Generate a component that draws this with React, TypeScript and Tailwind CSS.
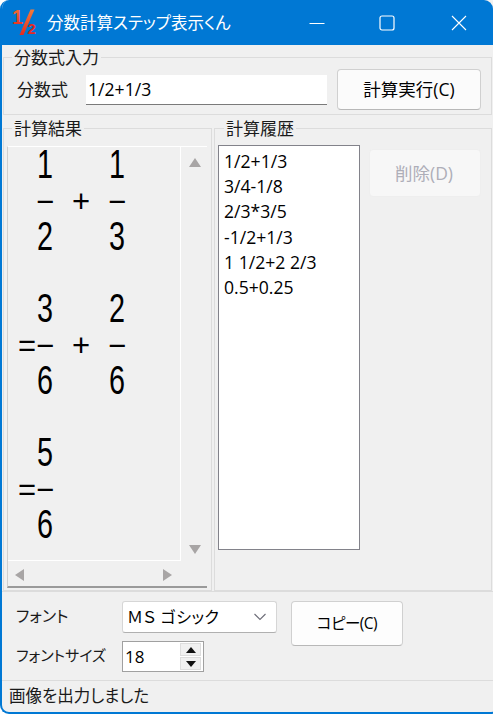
import React from "react";

const JP = "font-['Open_Sans','Noto_Sans_CJK_JP',sans-serif] [font-feature-settings:'palt']";

const LINES = [
  " 1   1",
  " - + -",
  " 2   3",
  "      ",
  " 3   2",
  "=- + -",
  " 6   6",
  "      ",
  " 5    ",
  "=-    ",
  " 6    ",
];

function MathCell({ c }: { c: string }) {
  if (c === " ") return <div className="h-9" />;
  if (c === "-" || c === "+" || c === "=") {
    return (
      <div className="flex items-center justify-center h-9 pt-[3px] font-['Liberation_Sans',sans-serif] text-[31px] leading-[33px] text-black">
        {c === "-" ? "\u2212" : c}
      </div>
    );
  }
  return (
    <div className="flex items-center justify-center h-9 font-['Liberation_Sans',sans-serif] text-[40px] leading-9 text-black scale-x-[0.72]">
      {c}
    </div>
  );
}

function MathLine({ text }: { text: string }) {
  return (
    <div className="grid grid-cols-[repeat(6,18px)] h-9">
      {text.split("").map((c, i) => (
        <MathCell key={i} c={c} />
      ))}
    </div>
  );
}

function Tri({ dir }: { dir: "up" | "down" | "left" | "right" }) {
  const pts = { up: "6,1 12,10 0,10", down: "0,1 12,1 6,10", left: "10,0 10,12 1,6", right: "1,0 1,12 10,6" }[dir];
  return (
    <svg width="12" height="12" viewBox="0 0 12 12" className="shrink-0">
      <polygon points={pts} fill="#a8a5a5" />
    </svg>
  );
}

function Group({ title, legendClass, className, children }: { title: string; legendClass: string; className: string; children: React.ReactNode }) {
  return (
    <fieldset className={"border border-[#dcdcdc] m-0 min-w-0 " + className}>
      <legend className={"px-[2px] text-[17px] leading-[17px] text-[#1a1a1a] " + legendClass}>{title}</legend>
      {children}
    </fieldset>
  );
}

export default function App() {
  return (
    <div className={"w-[493px] h-[714px] bg-white overflow-hidden " + JP}>
      <div className="w-[500px] h-[714px] flex flex-col rounded-[9px] overflow-hidden bg-[#f0f0f0] border-l-2 border-b-2 border-[#0078d4]">
        {/* title bar */}
        <div className="h-[45px] shrink-0 -ml-[2px] w-[493px] bg-[#0078d4] flex items-center rounded-tr-[9px] text-white">
          <svg width="28" height="28" viewBox="0 0 28 28" className="ml-[12px] mt-[1px] shrink-0">
            <defs>
              <linearGradient id="g" x1="0" y1="0" x2="0" y2="1">
                <stop offset="0" stopColor="#f47b3a" />
                <stop offset="1" stopColor="#e5291f" />
              </linearGradient>
            </defs>
            <text x="0" y="14.5" fontSize="20" fontWeight="700" fontFamily="Liberation Sans" fill="url(#g)">1</text>
            <path d="M18.5 0.5 L22.5 0.5 L11.5 26 L7.5 26 Z" fill="url(#g)" />
            <text x="15.5" y="24.5" fontSize="15" fontWeight="700" fontFamily="Liberation Sans" fill="#e5291f">2</text>
          </svg>
          <span className="ml-[7px] text-[16.5px] leading-[20px]">分数計算ステップ表示くん</span>
          <div className="ml-auto flex items-center h-full">
            <svg width="16" height="16" viewBox="0 0 16 16" className="mr-[54px]">
              <path d="M0.5 8.5H15.5" stroke="#fff" strokeWidth="1" />
            </svg>
            <svg width="16" height="16" viewBox="0 0 16 16" className="mr-[56px]">
              <rect x="1" y="1" width="14" height="14" rx="2" fill="none" stroke="#fff" strokeWidth="1.2" />
            </svg>
            <svg width="16" height="16" viewBox="0 0 16 16" className="mr-[26px]">
              <path d="M1 1L15 15M15 1L1 15" stroke="#fff" strokeWidth="1.1" />
            </svg>
          </div>
        </div>

        {/* 分数式入力 */}
        <Group title="分数式入力" legendClass="ml-[8px]" className="h-[66px] ml-[1px] w-[489px] mt-[4px] shrink-0">
          <div className="flex items-start mt-[3px] pl-[13px]">
            <label className="mt-[9px] w-[69px] text-[17px] leading-[24px] text-[#1a1a1a]">分数式</label>
            <div className="w-[241px] h-[30px] mt-[6px] bg-white border-b border-[#7a7a7a] flex items-center pl-[2px] text-[17.6px] text-black">1/2+1/3</div>
            <button className="ml-[10px] w-[144px] h-[41px] rounded-[4px] bg-[#fbfbfb] border border-[#d0d0d0] border-b-[#b8b8b8] text-[17.5px] text-black">計算実行(C)</button>
          </div>
        </Group>

        {/* middle */}
        <div className="flex mt-[5px] h-[471px] w-[491px] shrink-0 pl-[1px]">
          <Group title="計算結果" legendClass="ml-[8px]" className="w-[209px] h-[471px]">
            <div className="ml-[3px] mt-[9px] w-[200px] h-[442px] grid grid-cols-[173px_27px] grid-rows-[414px_28px] border-t border-white border-b-2 border-b-[#9a9a9a] border-l border-l-[#cfcfcf]">
              <div className="border-r border-b border-white overflow-hidden pl-[10px]">
                <div className="-mt-[1px]">
                  {LINES.map((l, i) => (
                    <MathLine key={i} text={l} />
                  ))}
                </div>
              </div>
              <div className="flex flex-col items-center justify-between pt-[10px] pb-[5px]">
                <Tri dir="up" />
                <Tri dir="down" />
              </div>
              <div className="flex items-center justify-between pl-[6px] pr-[7px]">
                <Tri dir="left" />
                <Tri dir="right" />
              </div>
              <div />
            </div>
          </Group>
          <Group title="計算履歴" legendClass="ml-[9px]" className="ml-[2px] w-[278px] h-[471px]">
            <div className="flex items-start mt-[8px]">
              <div className="ml-[3px] w-[142px] h-[405px] bg-white border border-[#82828a] pt-[3px] pl-[5px] text-[17.6px] leading-[25.2px] text-black">
                <div>1/2+1/3</div>
                <div>3/4-1/8</div>
                <div>2/3*3/5</div>
                <div>-1/2+1/3</div>
                <div>1 1/2+2 2/3</div>
                <div>0.5+0.25</div>
              </div>
              <button disabled className="ml-[9px] mt-[4px] w-[112px] h-[48px] rounded-[4px] bg-[#f7f7f7] border border-[#eeeeee] text-[17.5px] pr-[2px] text-[#aeaeb8]">削除(D)</button>
            </div>
          </Group>
        </div>

        {/* bottom */}
        <div className="h-[90px] shrink-0 w-[491px] flex border-t border-[#dcdcdc] border-b pl-[14px]">
          <div className="w-[106px] text-[#1a1a1a]">
            <div className="mt-[12px] leading-[24px] text-[16px]">フォント</div>
            <div className="mt-[15px] leading-[24px] text-[15px]">フォントサイズ</div>
          </div>
          <div className="flex flex-col">
            <div className="mt-[9px] w-[155px] h-[32px] bg-white border border-[#d6d6d6] border-b-[#b0b0b0] rounded-[3px] flex items-center pl-[4px] text-[16px] text-black">
              <span className="tracking-[0.5px]">ＭＳ ゴシック</span>
              <svg width="14" height="8" viewBox="0 0 14 8" className="ml-auto mr-[9px]">
                <path d="M1.5 1L7 6.5L12.5 1" fill="none" stroke="#6d6d78" strokeWidth="1.1" />
              </svg>
            </div>
            <div className="mt-[8px] w-[82px] h-[31px] bg-white border border-[#a0a0a0] flex">
              <div className="flex-1 pl-[2px] text-[17px] leading-[29px] text-black">18</div>
              <div className="w-[23px] flex flex-col gap-[1px] p-[1px] mr-[1px]">
                <div className="flex-1 bg-[#f0f0f0] border border-[#dddddd] flex items-center justify-center">
                  <svg width="10" height="6" viewBox="0 0 10 6"><polygon points="5,0 10,6 0,6" fill="#111" /></svg>
                </div>
                <div className="flex-1 bg-[#f0f0f0] border border-[#dddddd] flex items-center justify-center">
                  <svg width="10" height="6" viewBox="0 0 10 6"><polygon points="0,0 10,0 5,6" fill="#111" /></svg>
                </div>
              </div>
            </div>
          </div>
          <button className="ml-[14px] mt-[9px] w-[112px] h-[45px] rounded-[4px] bg-[#fdfdfd] border border-[#d0d0d0] border-b-[#b8b8b8] text-[15.5px] tracking-[-0.5px] text-black">コピー(C)</button>
        </div>

        {/* status */}
        <div className="flex-1 flex items-center pl-[7px] text-[16.5px] text-[#1a1a1a]">画像を出力しました</div>
      </div>
    </div>
  );
}
